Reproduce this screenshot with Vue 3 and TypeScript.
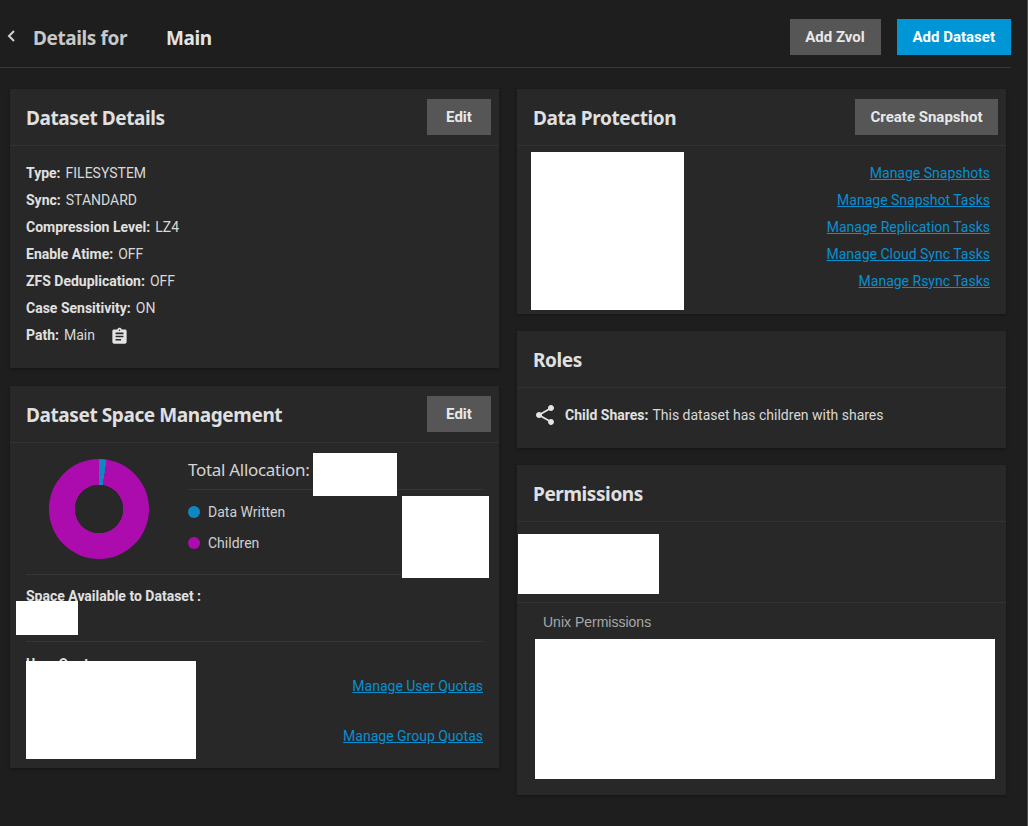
<script setup lang="ts">
interface Row { label: string; value: string }
const details: Row[] = [
  { label: 'Type:', value: 'FILESYSTEM' },
  { label: 'Sync:', value: 'STANDARD' },
  { label: 'Compression Level:', value: 'LZ4' },
  { label: 'Enable Atime:', value: 'OFF' },
  { label: 'ZFS Deduplication:', value: 'OFF' },
  { label: 'Case Sensitivity:', value: 'ON' },
]
const tasks: string[] = [
  'Manage Snapshots',
  'Manage Snapshot Tasks',
  'Manage Replication Tasks',
  'Manage Cloud Sync Tasks',
  'Manage Rsync Tasks',
]
</script>

<template>
  <div class="page">
    <header class="top">
      <svg class="back" viewBox="0 0 10 14" width="10" height="14"><path d="M8 2 L3 7 L8 12" fill="none" stroke="#d0d0d0" stroke-width="2"/></svg>
      <h1 class="crumb">Details for</h1>
      <h1 class="crumb name">Main</h1>
      <div class="top-actions">
        <button class="btn zvol">Add Zvol</button>
        <button class="btn primary">Add Dataset</button>
      </div>
    </header>

    <main class="cols">
      <div class="col">
        <section class="card c-details">
          <div class="card-head">
            <h2>Dataset Details</h2>
            <button class="btn edit">Edit</button>
          </div>
          <div class="details">
            <div v-for="r in details" :key="r.label" class="row">
              <b>{{ r.label }}</b> <span>{{ r.value }}</span>
            </div>
            <div class="row">
              <b>Path:</b> <span>Main</span>
              <svg class="clip" viewBox="0 0 24 24" width="19" height="19"><path fill="#e4e4e4" d="M19 3h-4.18C14.4 1.84 13.3 1 12 1s-2.4.84-2.82 2H5c-1.1 0-2 .9-2 2v14c0 1.1.9 2 2 2h14c1.1 0 2-.9 2-2V5c0-1.1-.9-2-2-2zm-7 0c.55 0 1 .45 1 1s-.45 1-1 1-1-.45-1-1 .45-1 1-1zm2 14H7v-2h7v2zm3-4H7v-2h10v2zm0-4H7V7h10v2z"/></svg>
            </div>
          </div>
        </section>

        <section class="card c-space">
          <div class="card-head">
            <h2>Dataset Space Management</h2>
            <button class="btn edit">Edit</button>
          </div>
          <div class="space-top">
            <div class="donut"></div>
            <div class="space-info">
              <div class="total">Total Allocation:</div>
              <div class="legend">
                <div class="legend-row"><i class="dot blue"></i>Data Written</div>
                <div class="legend-row"><i class="dot purple"></i>Children</div>
              </div>
            </div>
          </div>
          <div class="space-avail">
            <b>Space Available to Dataset :</b>
          </div>
          <div class="quotas">
            <b class="q-title">User Quotas :</b>
            <div class="q-links">
              <a>Manage User Quotas</a>
              <a>Manage Group Quotas</a>
            </div>
          </div>
          <div class="mask m-total"></div>
          <div class="mask m-legend"></div>
          <div class="mask m-avail"></div>
          <div class="mask m-quota"></div>
        </section>
      </div>

      <div class="col">
        <section class="card c-protect">
          <div class="card-head">
            <h2>Data Protection</h2>
            <button class="btn snap">Create Snapshot</button>
          </div>
          <div class="tasks">
            <a v-for="t in tasks" :key="t">{{ t }}</a>
          </div>
          <div class="mask m-protect"></div>
        </section>

        <section class="card c-roles">
          <div class="card-head plain"><h2>Roles</h2></div>
          <div class="roles-body">
            <svg viewBox="0 0 24 24" width="24" height="24"><path fill="#e4e4e4" d="M18 16.08c-.76 0-1.44.3-1.96.77L8.91 12.7c.05-.23.09-.46.09-.7s-.04-.47-.09-.7l7.05-4.11c.54.5 1.25.81 2.04.81 1.66 0 3-1.34 3-3s-1.34-3-3-3-3 1.34-3 3c0 .24.04.47.09.7L8.04 9.81C7.5 9.31 6.79 9 6 9c-1.66 0-3 1.34-3 3s1.34 3 3 3c.79 0 1.5-.31 2.04-.81l7.12 4.16c-.05.21-.08.43-.08.65 0 1.61 1.31 2.92 2.92 2.92s2.92-1.31 2.92-2.92-1.31-2.92-2.92-2.92z"/></svg>
            <b>Child Shares:</b> <span>This dataset has children with shares</span>
          </div>
        </section>

        <section class="card c-perm">
          <div class="card-head plain"><h2>Permissions</h2></div>
          <div class="perm-owner"></div>
          <div class="perm-unix">Unix Permissions</div>
          <div class="mask m-owner"></div>
          <div class="mask m-unix"></div>
        </section>
      </div>
    </main>
  </div>
</template>

<style>
html, body { margin: 0; background: #1e1e1e; }
</style>

<style scoped>
.page {
  width: 1028px;
  height: 826px;
  overflow: hidden;
  box-sizing: border-box;
  background: #1e1e1e;
  border-right: 1px solid #505050;
  color: #e0e0e0;
  font-family: Roboto, "Liberation Sans", sans-serif;
  font-size: 14px;
}
h1, h2 { margin: 0; font-family: "Noto Sans", sans-serif; font-weight: 700; }
.top {
  width: 1011px;
  height: 68px;
  box-sizing: border-box;
  display: flex;
  align-items: center;
  border-bottom: 1px solid #383838;
  padding-top: 8px;
  padding-left: 6px;
}
.back { margin-top: -4px; }
.crumb { font-size: 19px; color: #c8c8c8; margin-left: 17px; letter-spacing: -0.4px; }
.crumb.name { color: #e4e4e4; margin-left: 39px; }
.top-actions { margin-left: auto; display: flex; gap: 16px; margin-top: -1px; }
.btn {
  height: 36px;
  border: 0;
  padding: 0 16px;
  background: #565656;
  color: #e8e8e8;
  font-family: Roboto, sans-serif;
  font-weight: 700;
  font-size: 15px;
}
.btn.zvol { width: 91px; padding: 0; }
.btn.primary { background: #0095d5; color: #fff; }
.btn.edit { width: 64px; padding: 0; }
.btn.snap { width: 143px; padding: 0; }
.cols { display: flex; gap: 18px; padding: 21px 0 0 10px; align-items: flex-start; }
.col { width: 489px; display: flex; flex-direction: column; gap: 17px; }
.card { position: relative; background: #282828; box-shadow: 0 1px 3px rgba(0,0,0,.35); }
.card-head {
  height: 57px;
  box-sizing: border-box;
  display: flex;
  align-items: center;
  justify-content: space-between;
  padding: 0 8px 0 16px;
  border-bottom: 1px solid #333;
}
.card-head h2 { font-size: 19px; color: #e0e0e0; letter-spacing: -0.4px; padding-top: 2px; }
.c-details { height: 279px; }
.c-space { height: 382px; margin-top: 1px; }
.c-protect { height: 225px; }
.c-roles { height: 117px; }
.c-perm { height: 330px; }
.details { padding: 14px 16px 0; }
.row { height: 27px; line-height: 27px; display: flex; align-items: center; gap: 5px; color: #d8d8d8; }
.row b { font-weight: 700; color: #e0e0e0; }
.clip { margin-left: 10px; margin-top: 2px; }
.space-top { display: flex; padding: 16px 16px 0 39px; height: 115px; }
.donut {
  width: 100px;
  height: 100px;
  flex: none;
  border-radius: 50%;
  background:
    radial-gradient(circle, #282828 24px, transparent 24.5px),
    conic-gradient(#0f87c0 0 2.4%, #ac0cad 2.4% 100%);
}
.space-info { margin-left: 39px; flex: 1; margin-top: -6px; }
.total { font-family: "Noto Sans", sans-serif; font-size: 17px; color: #d4d4d4; height: 36px; line-height: 34px; border-bottom: 1px solid #353535; letter-spacing: -0.3px; }
.legend { padding-top: 6px; }
.legend-row { height: 31px; display: flex; align-items: center; gap: 8px; color: #d0d0d0; }
.dot { width: 12px; height: 12px; border-radius: 50%; }
.blue { background: #0f87c0; }
.purple { background: #ac0cad; }
.space-avail { margin: 0 16px; height: 68px; box-sizing: border-box; padding-top: 13px; border-top: 1px solid #353535; border-bottom: 1px solid #353535; }
.space-avail b, .q-title { font-weight: 700; color: #e0e0e0; }
.quotas { margin: 0 16px; display: flex; justify-content: space-between; padding-top: 14px; }
.q-links { display: flex; flex-direction: column; align-items: flex-end; gap: 34px; padding-top: 22px; }
a { color: #0a8fd0; text-decoration: underline; }
.tasks { display: flex; flex-direction: column; align-items: flex-end; gap: 10.6px; padding: 19px 16px 0 0; }
.tasks a { line-height: 16.4px; }
.roles-body { display: flex; align-items: center; padding: 0 16px; height: 54px; color: #d8d8d8; }
.roles-body svg { margin-right: 8px; }
.roles-body b { font-weight: 700; color: #e0e0e0; margin-right: 4px; }
.perm-owner { height: 80px; border-bottom: 1px solid #333; }
.perm-unix { padding: 11px 26px; color: #a8a8a8; font-family: "Liberation Sans", sans-serif; font-size: 14px; }
.mask { position: absolute; background: #fff; }
.m-total { left: 303px; top: 67px; width: 84px; height: 43px; }
.m-legend { left: 392px; top: 110px; width: 87px; height: 82px; }
.m-avail { left: 6px; top: 215px; width: 62px; height: 34px; }
.m-quota { left: 16px; top: 275px; width: 170px; height: 98px; }
.m-protect { left: 14px; top: 63px; width: 153px; height: 158px; }
.m-owner { left: 1px; top: 69px; width: 141px; height: 60px; }
.m-unix { left: 18px; top: 174px; width: 460px; height: 140px; }
</style>
